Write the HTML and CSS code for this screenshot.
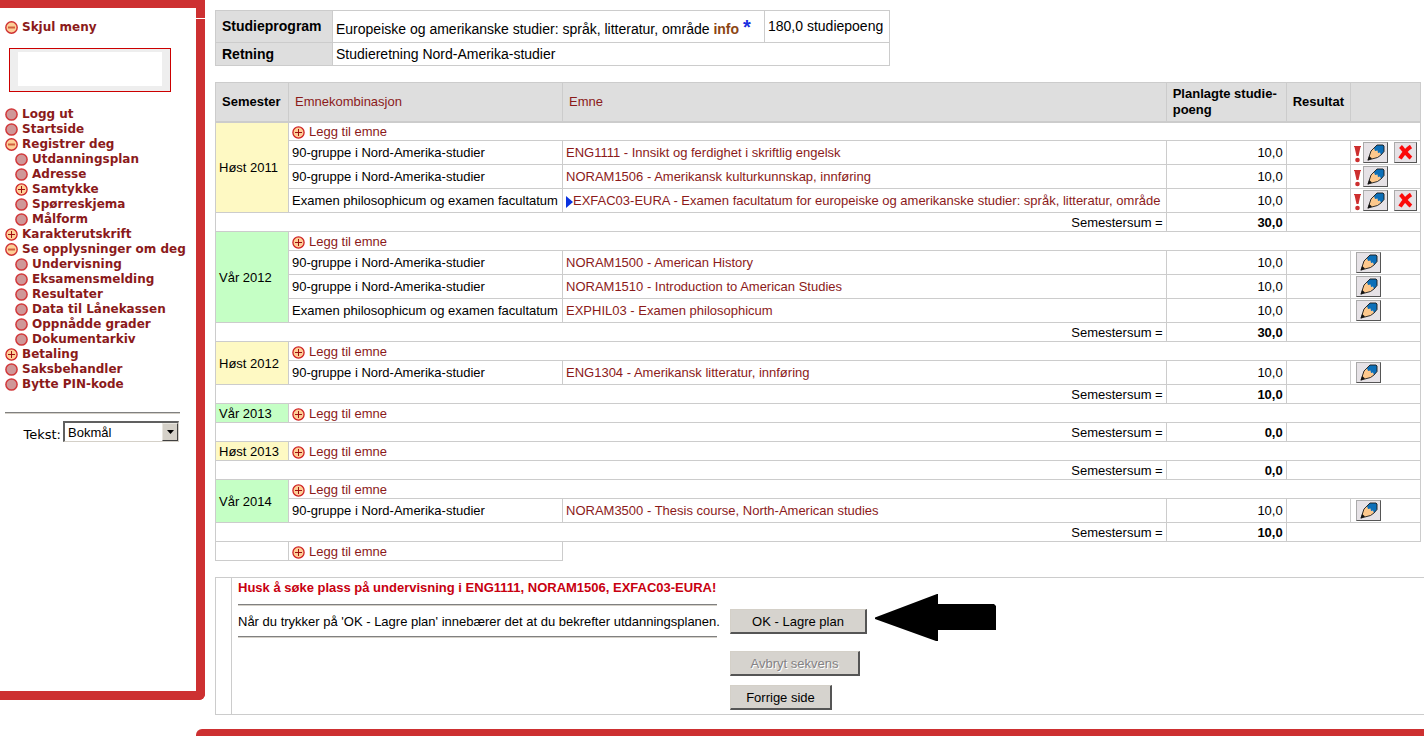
FILE: index.html
```html
<!DOCTYPE html>
<html lang="no">
<head>
<meta charset="utf-8">
<title>Utdanningsplan</title>
<link rel="stylesheet" href="styles.css">
</head>
<body>
<svg class="sprite" aria-hidden="true">
  <symbol id="dot" viewBox="0 0 13 13"><circle cx="6.5" cy="6.5" r="5.6" fill="#cf9798" stroke="#d2393b" stroke-width="1.5"/></symbol>
  <symbol id="minus" viewBox="0 0 13 13"><circle cx="6.5" cy="6.5" r="5.7" fill="#fdcf97" stroke="#cf3032" stroke-width="1.4"/><path d="M3 6.500h7" stroke="#d0603c" stroke-width="2"/></symbol>
  <symbol id="plus" viewBox="0 0 13 13"><circle cx="6.5" cy="6.5" r="5.6" fill="#fdcf97" stroke="#cf2022" stroke-width="1.3"/><path d="M3 6.500h7M6.500 3v7" stroke="#a01010" stroke-width="1"/></symbol>
  <symbol id="bang" viewBox="0 0 7 17"><path d="M0 0h7v1H6.500L4.500 10h-2L.5 1H0z" fill="#cd2f2f"/><circle cx="3.500" cy="14" r="2.300" fill="#cd2f2f"/></symbol>
  <symbol id="pencil" viewBox="0 0 20 18"><path d="M2 16L5 7l3.500-3.500L15 10.500 11.500 13.500z" fill="#fdc88c"/><path d="M8 4l3-3h6l1 1v5.500l-3 3.500-1-2.500-2 .5-.5-2.500-2.500.5z" fill="#0c6fb8"/><path d="M2 16L5 7l6-6h6l1 1v5.500l-3 3.500-3.500 2.500z" fill="none" stroke="#1a1a1a" stroke-width=".9"/><path d="M1.500 16.700l1.700-4.700 2.800 2.600z" fill="#111"/></symbol>
  <symbol id="cross" viewBox="0 0 15 15"><path d="M2.500 1.500c2 2 4 5 5.500 6.500 2 2 3 3.500 5 5M13 1.500C9 4 5 9 2 13.500" fill="none" stroke="#fb0a0a" stroke-width="4"/></symbol>
</svg>
<div class="page">
  <nav class="sidebar">
    <a class="menu-link menu-toggle" href="#"><svg class="icon"><use href="#minus"/></svg>Skjul meny</a>
    <div class="userbox"><div class="userbox-inner"></div></div>
    <ul class="menu">
      <li><a class="menu-link" href="#"><svg class="icon"><use href="#dot"/></svg>Logg ut</a></li>
      <li><a class="menu-link" href="#"><svg class="icon"><use href="#dot"/></svg>Startside</a></li>
      <li><a class="menu-link" href="#"><svg class="icon"><use href="#minus"/></svg>Registrer deg</a>
        <ul class="submenu">
          <li><a class="menu-link" href="#"><svg class="icon"><use href="#dot"/></svg>Utdanningsplan</a></li>
          <li><a class="menu-link" href="#"><svg class="icon"><use href="#dot"/></svg>Adresse</a></li>
          <li><a class="menu-link" href="#"><svg class="icon"><use href="#plus"/></svg>Samtykke</a></li>
          <li><a class="menu-link" href="#"><svg class="icon"><use href="#dot"/></svg>Spørreskjema</a></li>
          <li><a class="menu-link" href="#"><svg class="icon"><use href="#dot"/></svg>Målform</a></li>
        </ul></li>
      <li><a class="menu-link" href="#"><svg class="icon"><use href="#plus"/></svg>Karakterutskrift</a></li>
      <li><a class="menu-link" href="#"><svg class="icon"><use href="#minus"/></svg>Se opplysninger om deg</a>
        <ul class="submenu">
          <li><a class="menu-link" href="#"><svg class="icon"><use href="#dot"/></svg>Undervisning</a></li>
          <li><a class="menu-link" href="#"><svg class="icon"><use href="#dot"/></svg>Eksamensmelding</a></li>
          <li><a class="menu-link" href="#"><svg class="icon"><use href="#dot"/></svg>Resultater</a></li>
          <li><a class="menu-link" href="#"><svg class="icon"><use href="#dot"/></svg>Data til Lånekassen</a></li>
          <li><a class="menu-link" href="#"><svg class="icon"><use href="#dot"/></svg>Oppnådde grader</a></li>
          <li><a class="menu-link" href="#"><svg class="icon"><use href="#dot"/></svg>Dokumentarkiv</a></li>
        </ul></li>
      <li><a class="menu-link" href="#"><svg class="icon"><use href="#plus"/></svg>Betaling</a></li>
      <li><a class="menu-link" href="#"><svg class="icon"><use href="#dot"/></svg>Saksbehandler</a></li>
      <li><a class="menu-link" href="#"><svg class="icon"><use href="#dot"/></svg>Bytte PIN-kode</a></li>
    </ul>
    <hr class="rule menu-rule">
    <div class="language">
      <label for="lang">Tekst:</label>
      <span class="select-wrap">
        <select id="lang" class="select"><option>Bokmål</option></select>
        <span class="select-arrow"><svg width="7" height="4" viewBox="0 0 7 4"><path d="M0 0h7L3.500 4z" fill="#000"/></svg></span>
      </span>
    </div>
  </nav>

  <main class="content">
    <table class="program">
      <tr><th class="program-name" scope="row">Studieprogram</th><td class="program-title">Europeiske og amerikanske studier: språk, litteratur, område <a class="info" href="#">info</a> <a class="star" href="#">*</a></td><td class="points">180,0 studiepoeng</td></tr>
      <tr><th scope="row">Retning</th><td colspan="2">Studieretning Nord-Amerika-studier</td></tr>
    </table>

    <table class="plan">
      <colgroup><col class="c-sem"><col class="c-comb"><col><col class="c-points"><col class="c-result"><col class="c-tools"></colgroup>
      <thead>
        <tr><th>Semester</th><th><a href="#">Emnekombinasjon</a></th><th><a href="#">Emne</a></th><th>Planlagte studie-<br>poeng</th><th>Resultat</th><th></th></tr>
      </thead>
      <tbody>
        <tr><td class="autumn" rowspan="4">Høst 2011</td><td class="add" colspan="5"><a href="#"><svg class="icon"><use href="#plus"/></svg>Legg til emne</a></td></tr>
        <tr class="course"><td>90-gruppe i Nord-Amerika-studier</td><td><a href="#">ENG1111 - Innsikt og ferdighet i skriftlig engelsk</a></td><td class="num">10,0</td><td></td><td><div class="tools"><svg class="bang"><use href="#bang"/></svg><button class="tool edit" aria-label="Rediger"><svg><use href="#pencil"/></svg></button><button class="tool delete" aria-label="Slett"><svg><use href="#cross"/></svg></button></div></td></tr>
        <tr class="course"><td>90-gruppe i Nord-Amerika-studier</td><td><a href="#">NORAM1506 - Amerikansk kulturkunnskap, innføring</a></td><td class="num">10,0</td><td></td><td><div class="tools"><svg class="bang"><use href="#bang"/></svg><button class="tool edit" aria-label="Rediger"><svg><use href="#pencil"/></svg></button></div></td></tr>
        <tr class="course"><td>Examen philosophicum og examen facultatum</td><td><a href="#"><svg class="marker" viewBox="0 0 7 12"><path d="M0 0l7 6-7 6z" fill="#0a32e0"/></svg>EXFAC03-EURA - Examen facultatum for europeiske og amerikanske studier: språk, litteratur, område</a></td><td class="num">10,0</td><td></td><td><div class="tools"><svg class="bang"><use href="#bang"/></svg><button class="tool edit" aria-label="Rediger"><svg><use href="#pencil"/></svg></button><button class="tool delete" aria-label="Slett"><svg><use href="#cross"/></svg></button></div></td></tr>
        <tr class="sum"><td colspan="3">Semestersum =</td><td class="total">30,0</td><td colspan="2"></td></tr>
      </tbody>
      <tbody>
        <tr><td class="spring" rowspan="4">Vår 2012</td><td class="add" colspan="5"><a href="#"><svg class="icon"><use href="#plus"/></svg>Legg til emne</a></td></tr>
        <tr class="course"><td>90-gruppe i Nord-Amerika-studier</td><td><a href="#">NORAM1500 - American History</a></td><td class="num">10,0</td><td></td><td><div class="tools"><button class="tool edit" aria-label="Rediger"><svg><use href="#pencil"/></svg></button></div></td></tr>
        <tr class="course"><td>90-gruppe i Nord-Amerika-studier</td><td><a href="#">NORAM1510 - Introduction to American Studies</a></td><td class="num">10,0</td><td></td><td><div class="tools"><button class="tool edit" aria-label="Rediger"><svg><use href="#pencil"/></svg></button></div></td></tr>
        <tr class="course"><td>Examen philosophicum og examen facultatum</td><td><a href="#">EXPHIL03 - Examen philosophicum</a></td><td class="num">10,0</td><td></td><td><div class="tools"><button class="tool edit" aria-label="Rediger"><svg><use href="#pencil"/></svg></button></div></td></tr>
        <tr class="sum"><td colspan="3">Semestersum =</td><td class="total">30,0</td><td colspan="2"></td></tr>
      </tbody>
      <tbody>
        <tr><td class="autumn" rowspan="2">Høst 2012</td><td class="add" colspan="5"><a href="#"><svg class="icon"><use href="#plus"/></svg>Legg til emne</a></td></tr>
        <tr class="course"><td>90-gruppe i Nord-Amerika-studier</td><td><a href="#">ENG1304 - Amerikansk litteratur, innføring</a></td><td class="num">10,0</td><td></td><td><div class="tools"><button class="tool edit" aria-label="Rediger"><svg><use href="#pencil"/></svg></button></div></td></tr>
        <tr class="sum"><td colspan="3">Semestersum =</td><td class="total">10,0</td><td colspan="2"></td></tr>
      </tbody>
      <tbody>
        <tr><td class="spring">Vår 2013</td><td class="add" colspan="5"><a href="#"><svg class="icon"><use href="#plus"/></svg>Legg til emne</a></td></tr>
        <tr class="sum"><td colspan="3">Semestersum =</td><td class="total">0,0</td><td colspan="2"></td></tr>
      </tbody>
      <tbody>
        <tr><td class="autumn">Høst 2013</td><td class="add" colspan="5"><a href="#"><svg class="icon"><use href="#plus"/></svg>Legg til emne</a></td></tr>
        <tr class="sum"><td colspan="3">Semestersum =</td><td class="total">0,0</td><td colspan="2"></td></tr>
      </tbody>
      <tbody>
        <tr><td class="spring" rowspan="2">Vår 2014</td><td class="add" colspan="5"><a href="#"><svg class="icon"><use href="#plus"/></svg>Legg til emne</a></td></tr>
        <tr class="course"><td>90-gruppe i Nord-Amerika-studier</td><td><a href="#">NORAM3500 - Thesis course, North-American studies</a></td><td class="num">10,0</td><td></td><td><div class="tools"><button class="tool edit" aria-label="Rediger"><svg><use href="#pencil"/></svg></button></div></td></tr>
        <tr class="sum"><td colspan="3">Semestersum =</td><td class="total">10,0</td><td colspan="2"></td></tr>
        <tr><td></td><td class="add"><a href="#"><svg class="icon"><use href="#plus"/></svg>Legg til emne</a></td></tr>
      </tbody>
    </table>

    <section class="confirm">
      <div class="confirm-body">
        <div class="confirm-text">
          <strong class="notice">Husk å søke plass på undervisning i ENG1111, NORAM1506, EXFAC03-EURA!</strong>
          <hr class="rule">
          <p class="explain">Når du trykker på 'OK - Lagre plan' innebærer det at du bekrefter utdanningsplanen.</p>
          <hr class="rule">
        </div>
        <div class="actions">
          <div class="primary">
            <button class="button ok">OK - Lagre plan</button>
            <svg class="arrow" width="122" height="48" viewBox="0 0 122 48"><path d="M0 23.500L62 0h1v10h56l2 2v24H63v11h-2L0 25z" fill="#000"/></svg>
          </div>
          <button class="button cancel" disabled>Avbryt sekvens</button>
          <button class="button back">Forrige side</button>
        </div>
      </div>
    </section>
  </main>
  <footer class="footer"></footer>
</div>
</body>
</html>
```
FILE: styles.css
```css
* { box-sizing: border-box; }

body {
  margin: 0;
  background: #fff;
  color: #000;
  font: 13px/15px "Liberation Sans", Arial, sans-serif;
}

a { color: #8b1a1a; text-decoration: none; }
ul { list-style: none; margin: 0; padding: 0; }
.sprite { display: none; }
.icon { width: 13px; height: 13px; flex: none; }

.page {
  display: grid;
  grid-template-columns: 205px minmax(0, 1fr);
  overflow: hidden;
}

/* Sidebar */
.sidebar {
  position: relative;
  margin-bottom: 29px;
  padding: 12px 16px 0 5px;
  border: solid #cd3031;
  border-width: 8px 9px 9px 0;
  border-bottom-right-radius: 6px;
  font-family: "DejaVu Sans", Verdana, sans-serif;
  font-size: 12px;
}
.sidebar::after {
  content: "";
  position: absolute;
  top: 10px;
  right: -9px;
  width: 9px;
  height: 1px;
  background: #fff;
}
.menu-link {
  display: flex;
  align-items: center;
  gap: 4px;
  height: 15px;
  font-weight: bold;
  white-space: nowrap;
}
.submenu { padding-left: 10px; }
.userbox {
  width: 162px;
  margin: 13px 0 15px 4px;
  padding: 3px 8px 5px;
  border: 1px solid #c00;
  background: #eee;
}
.userbox-inner { height: 34px; background: #fff; }

.rule {
  height: 2px;
  margin: 0;
  border: 0;
  border-top: 1px solid #808080;
  background: #d4d0c8;
}
.menu-rule { margin: 20px 0 7px; }
.language {
  display: flex;
  align-items: center;
  justify-content: flex-end;
  gap: 2px;
  padding-right: 1px;
}
.language label { padding-top: 6px; font-size: 13px; }
.select-wrap { position: relative; }
.select {
  display: block;
  width: 116px;
  height: 21px;
  padding: 0 20px 0 3px;
  border: 1px solid #d4d0c8;
  border-top: 2px solid #606060;
  border-left: 2px solid #606060;
  border-radius: 0;
  background: #fff;
  font: 13px/17px "Liberation Sans", Arial, sans-serif;
  appearance: none;
}
.select-arrow {
  position: absolute;
  top: 2px;
  right: 1px;
  bottom: 1px;
  display: flex;
  align-items: center;
  justify-content: center;
  width: 16px;
  border: 1px solid #e8e6e0;
  border-right-color: #404040;
  border-bottom-color: #404040;
  background: #d4d0c8;
  pointer-events: none;
}

/* Tables */
.content { padding: 10px 3px 14px 10px; }
table { border-collapse: collapse; }
th, td { border: 1px solid #ccc; padding: 0 3px; white-space: nowrap; }
th { background: #dedede; text-align: left; }

.program { font-size: 14px; }
.program tr { height: 23px; }
.program tr:first-child { height: 32px; }
.program th { width: 117px; padding-left: 6px; }
.program-title { width: 432px; padding-top: 3px; }
.program .points { width: 125px; padding-bottom: 1px; }
.info { color: #8b4513; font-weight: bold; }
.star { color: #1a2fe0; font-size: 20px; font-weight: bold; line-height: 15px; }

.plan { width: 100%; margin-top: 16px; }
.c-sem { width: 73px; }
.c-comb { width: 274px; }
.c-points { width: 120px; }
.c-result { width: 64px; }
.c-tools { width: 70px; }
.plan thead tr { height: 39px; border-bottom: 2px solid #ccc; }
.plan th { padding: 0 6px; line-height: 16px; }
.plan th a { font-weight: normal; }
.plan tr { height: 19px; }
.plan .course { height: 24px; }
.autumn { background: #fef9c3; }
.spring { background: #c5ffc5; }
.add a { display: flex; align-items: center; gap: 4px; }
.add .icon { margin-top: 2px; }
.marker { width: 7px; height: 12px; vertical-align: -3px; }
.num, .sum td, .total { text-align: right; }
.total { font-weight: bold; }
.tools { display: flex; align-items: center; gap: 2px; margin-right: -2px; padding-left: 2px; }
.bang { width: 7px; height: 17px; margin: 3px 0 0 -2px; }
.tool {
  display: flex;
  align-items: center;
  justify-content: center;
  width: 25px;
  height: 21px;
  padding: 0;
  border: 1px solid #aaa;
  border-right: 1px solid #555;
  border-bottom: 1px solid #555;
  background: #e6e2e6;
}
.edit svg { width: 20px; height: 18px; }
.delete { width: 23px; margin-left: 4px; }
.delete svg { width: 15px; height: 15px; }

/* Confirmation panel */
.confirm {
  margin: 16px -3px 0 0;
  padding-left: 15px;
  border: 1px solid #ccc;
  border-right: 0;
}
.confirm-body {
  display: flex;
  align-items: flex-start;
  gap: 13px;
  padding: 2px 0 4px 6px;
  border-left: 1px solid #ccc;
}
.confirm-text { width: 479px; white-space: nowrap; }
.notice { display: block; margin-bottom: 9px; color: #c80010; }
.explain { margin: 8px 0 7px; }
.actions {
  display: flex;
  flex-direction: column;
  align-items: flex-start;
  padding-top: 29px;
}
.primary { position: relative; }
.arrow { position: absolute; top: -15px; left: 145px; }
.button {
  display: block;
  height: 25px;
  padding: 0;
  border: solid #d4d0c8;
  border-width: 1px 2px 2px 1px;
  border-right-color: #555;
  border-bottom-color: #555;
  background: #d6d3ce;
  color: #000;
  font: 13px/15px "Liberation Sans", Arial, sans-serif;
}
.ok { width: 137px; }
.cancel { width: 130px; margin: 17px 0 9px; color: #848284; text-shadow: 1px 1px #fff; }
.back { width: 102px; }

.footer {
  grid-column: 1 / -1;
  height: 7px;
  margin-left: 196px;
  border-top-left-radius: 6px;
  background: #cd3031;
}
```
